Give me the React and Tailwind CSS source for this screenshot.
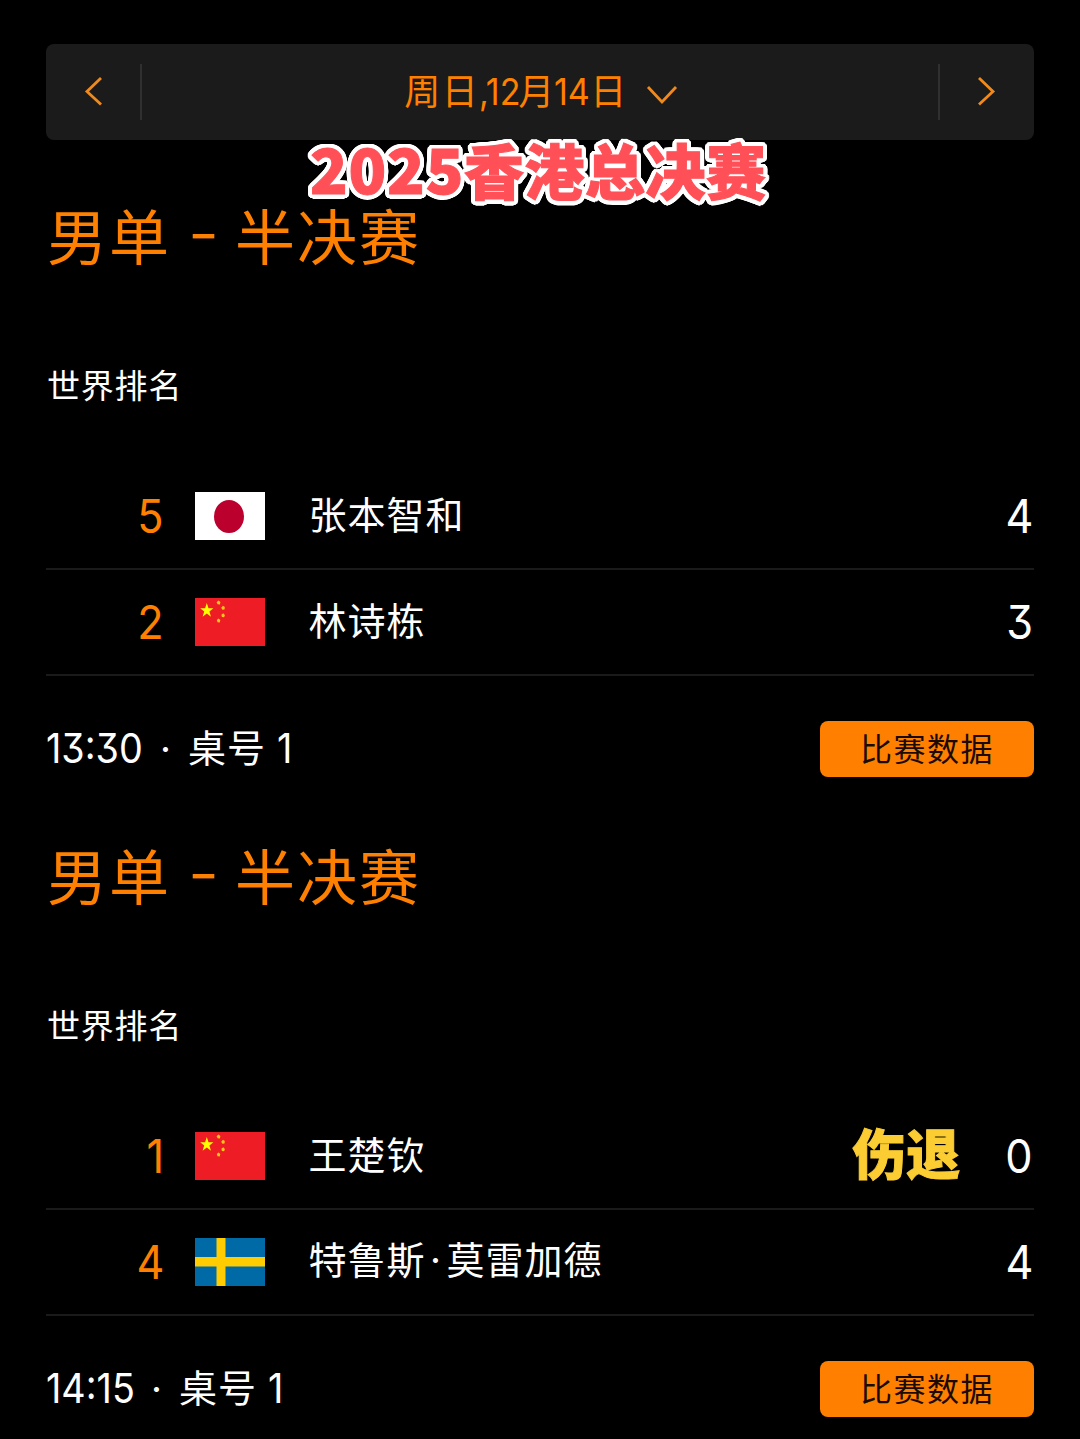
import React from 'react';
import clsx from 'clsx';

const matches = [
  {
    id: 1,
    title: ['男单', '半决赛'],
    time: '13:30',
    timeWidth: 'w-[97px]',
    table: '1',
    players: [
      { rank: 5, country: 'jp', name: '张本智和', score: 4 },
      { rank: 2, country: 'cn', name: '林诗栋', score: 3 },
    ],
  },
  {
    id: 2,
    title: ['男单', '半决赛'],
    time: '14:15',
    timeWidth: 'w-[88px]',
    table: '1',
    players: [
      { rank: 1, country: 'cn', name: '王楚钦', score: 0, note: '伤退' },
      { rank: 4, country: 'se', name: '特鲁斯·莫雷加德', score: 4 },
    ],
  },
];

// Round white outline for the banner, built from shadows on a circle
const outline = Array.from({ length: 32 }, (_, i) => {
  const angle = (i / 32) * Math.PI * 2;
  return `${(Math.cos(angle) * 4.5).toFixed(2)}px ${(Math.sin(angle) * 4.5).toFixed(2)}px 0 #fff`;
}).join(', ');

// Narrow digits with a flat-top three
const Num = ({ children, className, origin = 'origin-left' }) => (
  <span
    className={clsx(
      "inline-block whitespace-pre font-['Inter','Noto_Sans',sans-serif] [font-feature-settings:'cv09'] scale-x-[0.92]",
      origin,
      className
    )}
  >
    {children}
  </span>
);

const Flag = ({ country }) => {
  if (country === 'jp') {
    return (
      <svg className="w-[70px] h-12" viewBox="0 0 70 48">
        <rect width="70" height="48" fill="#fff" />
        <ellipse cx="34" cy="24.5" rx="15" ry="16.5" fill="#bc002d" />
      </svg>
    );
  }
  if (country === 'se') {
    return (
      <svg className="w-[70px] h-12" viewBox="0 0 70 48">
        <rect width="70" height="48" fill="#006aa7" />
        <path d="M21.500 0h9v48h-9zM0 19h70v9.500H0z" fill="#fecc00" />
      </svg>
    );
  }
  return (
    <svg className="w-[70px] h-12" viewBox="0 0 70 48">
      <rect width="70" height="48" fill="#ee1c25" />
      <path
        d="M11.800 5l1.700 5.200h4.900l-4 3.300 1.600 5.300-4.200-3.200-4.200 3.200 1.600-5.300-4-3.300h4.900z"
        fill="#ff0"
      />
      <g fill="#fbc51b">
        <path d="M23.500 2.500l1.900 1.500-.5 2.400-2.300-.1-1-2z" />
        <path d="M28 7.800l1.800 1.200-.3 2.600-2.100.2-1.200-2.100z" />
        <path d="M28.200 15.300l1.700 1.600-.8 2.400-2.200-.3-.5-2.300z" />
        <path d="M23.500 20.500l1.800 1.500-.6 2.400-2.100-.1-.8-2.200z" />
      </g>
    </svg>
  );
};

const Chevron = ({ d, className }) => (
  <svg className={className} fill="none" stroke="#f08a1c" strokeWidth="2.8">
    <path d={d} />
  </svg>
);

const DateBar = () => (
  <div className="flex items-center h-24 rounded-lg bg-[#1b1b1b] text-[#ff8000]">
    <button className="flex items-center justify-center w-24 h-14 border-r-2 border-[#303030]">
      <Chevron className="w-5 h-8" d="M18 2L4 15.500l14 13" />
    </button>
    <button className="flex-1 flex items-center justify-center pl-0.5">
      <span className="flex items-center text-[36px] leading-[50px] tracking-[1.500px]">
        <span className="pb-[6px]">周日</span>
        <Num className="w-[39px] text-[37px] tracking-normal">,12</Num>
        <span className="w-9 pb-[6px]">月</span>
        <Num className="w-9 text-[37px] tracking-normal">14</Num>
        <span className="pb-[6px]">日</span>
      </span>
      <Chevron className="ml-[18px] mt-[5px] w-8 h-5" d="M2 2l14 15L30 2" />
    </button>
    <button className="flex items-center justify-center w-24 h-14 border-l-2 border-[#303030]">
      <Chevron className="w-5 h-8" d="M2 2l14 13.500L2 28.500" />
    </button>
  </div>
);

const PlayerRow = ({ player }) => (
  <div className="flex items-center h-[106px] border-b-2 border-[#1a1a1a]">
    <div className="w-[118px] pb-1 text-right text-[47px] leading-none text-[#ff8000]">
      <Num origin="origin-right">{player.rank}</Num>
    </div>
    <div className="ml-[31px]">
      <Flag country={player.country} />
    </div>
    <div className="ml-[43.500px] pb-[6px] flex-1 text-[38px] leading-[52px] tracking-[1px]">
      {player.name.split('·').map((part, i) => (
        <React.Fragment key={part}>
          {i > 0 && <span className="inline-block w-[21px] text-center font-['Inter',sans-serif]">·</span>}
          {part}
        </React.Fragment>
      ))}
    </div>
    {player.note && (
      <div className="mr-[43px] pb-[9px] text-[54px] leading-none font-black text-[#fbcd33] [-webkit-text-stroke:1px_#fbcd33]">
        {player.note}
      </div>
    )}
    <div className="mr-px pb-1 text-[47px] leading-none">
      <Num origin="origin-right">{player.score}</Num>
    </div>
  </div>
);

const Match = ({ match }) => (
  <section className="h-[640px] pt-[57px]">
    <h2 className="flex items-center h-20 pl-[1px] text-[60px] leading-none tracking-[2px] text-[#ff8000]">
      <span className="pb-[7px]">{match.title[0]}</span>
      <span className="w-16 pb-[6px] text-center font-['Inter',sans-serif] text-[54px] tracking-normal">
        <span className="inline-block scale-x-[1.25]">-</span>
      </span>
      <span className="pb-[7px]">{match.title[1]}</span>
    </h2>
    <p className="mt-[87px] h-[41px] pl-px text-[33px] leading-10 tracking-[0.800px]">世界排名</p>
    <div className="mt-[59px]">
      {match.players.map((player) => (
        <PlayerRow key={player.name} player={player} />
      ))}
    </div>
    <div className="mt-[45px] flex items-center justify-between h-14">
      <div className="flex items-center text-[38px] tracking-[1px]">
        <Num className={clsx('text-[41px] tracking-normal', match.timeWidth)}>{match.time}</Num>
        <span className="w-[45px] text-center font-['Inter',sans-serif] tracking-normal">·</span>
        <span className="pb-[7px]">桌号</span>
        <Num className="ml-[11px] text-[41px]">{match.table}</Num>
      </div>
      <button className="w-[214px] h-14 pb-1 rounded-lg bg-[#ff8000] text-[32px] tracking-[1.500px] text-[#1a0a00]">
        比赛数据
      </button>
    </div>
  </section>
);

const App = () => {
  return (
    <div className="relative w-[1080px] h-[1439px] overflow-hidden bg-black text-white px-[46px] pt-11 font-['Noto_Sans_CJK_SC',sans-serif]">
      <DateBar />
      {matches.map((match) => (
        <Match key={match.id} match={match} />
      ))}
      <div
        className="absolute left-[310px] top-[136px] flex items-center whitespace-nowrap text-[60px] leading-none font-black text-[#ff5058] [-webkit-text-stroke:1px_#ff5058]"
        style={{ textShadow: outline }}
      >
        <span className="w-[154px] pb-[8px] text-[62px] tracking-[0.800px]">2025</span>
        <span className="pb-[4px] tracking-[0.500px]">香港总决赛</span>
      </div>
    </div>
  );
};

export default App;
